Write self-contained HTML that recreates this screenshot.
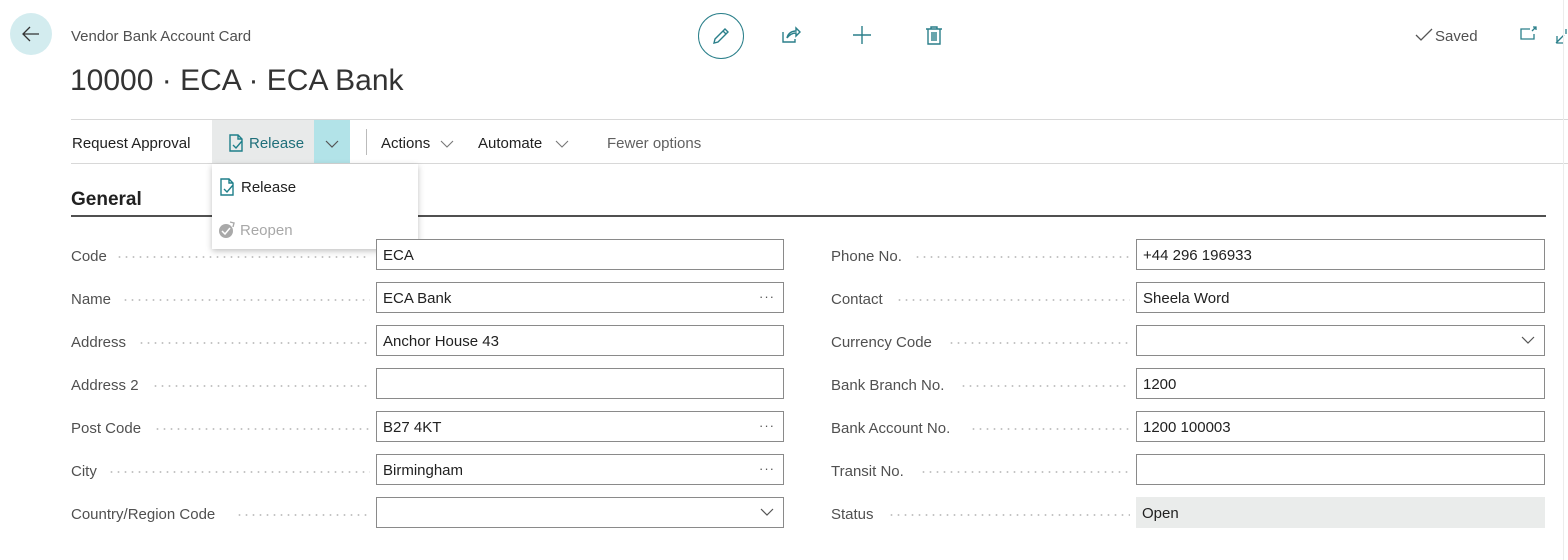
<!DOCTYPE html>
<html><head><meta charset="utf-8"><style>
*{box-sizing:border-box;margin:0;padding:0}
body{width:1568px;height:560px;background:#fff;font-family:"Liberation Sans",sans-serif;color:#212121;position:relative;overflow:hidden}
.a{position:absolute}
.lbl{position:absolute;font-size:15px;color:#505050;white-space:nowrap}
.dots{position:absolute;height:2px;background-image:radial-gradient(circle,#c4c4c4 0.8px,transparent 1.1px);background-size:7px 2px;background-repeat:repeat-x}
.in{position:absolute;height:31px;border:1px solid #8a8a8a;font-size:15px;padding:7px 6px 0;color:#212121;background:#fff}
.ell{position:absolute;right:8px;top:8px;color:#555;font-size:13px;letter-spacing:1px;line-height:12px}
.chev{position:absolute;right:9px;top:9px}
</style></head><body>
<div class="a" style="left:10px;top:13px;width:42px;height:42px;border-radius:50%;background:#d3ecef"></div>
<svg class="a" style="left:20px;top:23px" width="22" height="22" viewBox="0 0 22 22"><path d="M19 11H3M10 4L3 11l7 7" stroke="#333" stroke-width="1.3" fill="none"/></svg>
<div class="a" style="left:71px;top:28px;font-size:15px;color:#505050">Vendor Bank Account Card</div>
<div class="a" style="left:70px;top:64px;font-size:30px;color:#333;font-weight:300">10000 · ECA · ECA Bank</div>
<div class="a" style="left:698px;top:13px;width:46px;height:46px;border-radius:50%;border:1px solid #2a7f8a"></div>
<svg class="a" style="left:709px;top:24px" width="24" height="24" viewBox="0 0 24 24"><path d="M5 19l1-4 10-10 3 3-10 10z M14 7l3 3" stroke="#2a7f8a" stroke-width="1.4" fill="none"/></svg>
<svg class="a" style="left:780px;top:24px" width="22" height="22" viewBox="0 0 22 22"><path d="M3 8v10h12v-3M7 14c1-5 5-7 9-7V4l4 4-4 4V9c-3 0-6 1-9 5z" stroke="#2a7f8a" stroke-width="1.4" fill="none"/></svg>
<svg class="a" style="left:851px;top:24px" width="22" height="22" viewBox="0 0 22 22"><path d="M11 2v18M2 11h18" stroke="#2a7f8a" stroke-width="1.4"/></svg>
<svg class="a" style="left:923px;top:24px" width="22" height="22" viewBox="0 0 22 22"><path d="M3 5h16M8 5V3h6v2M5 5v15h12V5M9 8v9M11 8v9M13 8v9" stroke="#2a7f8a" stroke-width="1.4" fill="none"/></svg>
<svg class="a" style="left:1414px;top:27px" width="20" height="16" viewBox="0 0 20 16"><path d="M2 8l5 5L18 2" stroke="#555" stroke-width="1.3" fill="none"/></svg>
<div class="a" style="left:1435px;top:28px;font-size:15px;color:#505050">Saved</div>
<svg class="a" style="left:1519px;top:25px" width="20" height="18" viewBox="0 0 20 18"><path d="M11 4H2v10h13V9M14 2l3 0 0 3M17 2l-4 4" stroke="#2a7f8a" stroke-width="1.3" fill="none"/></svg>
<svg class="a" style="left:1554px;top:28px" width="14" height="18" viewBox="0 0 14 18"><path d="M2 15l8-8M3 8v7h7M12 1v5" stroke="#2a7f8a" stroke-width="1.3" fill="none"/></svg>

<div class="a" style="left:71px;top:119px;width:1497px;height:1px;background:#d8d8d8"></div>
<div class="a" style="left:71px;top:163px;width:1497px;height:1px;background:#d8d8d8"></div>
<div class="a" style="left:72px;top:135px;font-size:15px;color:#212121">Request Approval</div>
<div class="a" style="left:212px;top:120px;width:102px;height:43px;background:#e8eaea"></div>
<div class="a" style="left:314px;top:120px;width:36px;height:43px;background:#b2e3e8"></div>
<svg class="a" style="left:227px;top:133px" width="18" height="20" viewBox="0 0 18 20"><path d="M3 2h8l4 4v12H3zM11 2v4h4M6 12l3 3 6-7" stroke="#1f7f8a" stroke-width="1.4" fill="none"/></svg>
<div class="a" style="left:249px;top:135px;font-size:15px;color:#1f6f7a">Release</div>
<svg class="a" style="left:325px;top:139px" width="14" height="10" viewBox="0 0 14 10"><path d="M1 2l6 6 6-6" stroke="#555" stroke-width="1.2" fill="none"/></svg>
<div class="a" style="left:366px;top:129px;width:1px;height:26px;background:#bbb"></div>
<div class="a" style="left:381px;top:135px;font-size:15px">Actions</div>
<svg class="a" style="left:440px;top:139px" width="14" height="10" viewBox="0 0 14 10"><path d="M1 2l6 6 6-6" stroke="#777" stroke-width="1.1" fill="none"/></svg>
<div class="a" style="left:478px;top:135px;font-size:15px">Automate</div>
<svg class="a" style="left:555px;top:139px" width="14" height="10" viewBox="0 0 14 10"><path d="M1 2l6 6 6-6" stroke="#777" stroke-width="1.1" fill="none"/></svg>
<div class="a" style="left:607px;top:135px;font-size:15px;color:#606060">Fewer options</div>

<div class="a" style="left:71px;top:189px;font-size:19px;font-weight:bold;color:#212121">General</div>
<div class="a" style="left:71px;top:215px;width:1475px;height:2px;background:#505050"></div>

<div class="a" style="left:212px;top:164px;width:206px;height:85px;background:#fff;box-shadow:0 2px 6px rgba(0,0,0,.25)"></div>
<svg class="a" style="left:218px;top:177px" width="18" height="20" viewBox="0 0 18 20"><path d="M3 2h8l4 4v12H3zM11 2v4h4M6 12l3 3 6-7" stroke="#1f7f8a" stroke-width="1.4" fill="none"/></svg>
<div class="a" style="left:241px;top:179px;font-size:15px">Release</div>
<svg class="a" style="left:217px;top:220px" width="20" height="20" viewBox="0 0 20 20"><circle cx="9" cy="11" r="7" fill="#a9a9a9"/><path d="M5 11l3 3 5-6" stroke="#fff" stroke-width="1.5" fill="none"/><path d="M13 2l4 1-1 4" stroke="#a9a9a9" stroke-width="1.4" fill="none"/></svg>
<div class="a" style="left:240px;top:222px;font-size:15px;color:#a8a8a8">Reopen</div>

<!-- left column -->
<div class="lbl" style="left:71px;top:248px">Code</div><div class="dots" style="left:116px;top:256px;width:254px"></div>
<div class="in" style="left:376px;top:239px;width:408px">ECA</div>
<div class="lbl" style="left:71px;top:291px">Name</div><div class="dots" style="left:122px;top:299px;width:248px"></div>
<div class="in" style="left:376px;top:282px;width:408px">ECA Bank<span class="ell">···</span></div>
<div class="lbl" style="left:71px;top:334px">Address</div><div class="dots" style="left:138px;top:342px;width:232px"></div>
<div class="in" style="left:376px;top:325px;width:408px">Anchor House 43</div>
<div class="lbl" style="left:71px;top:377px">Address 2</div><div class="dots" style="left:152px;top:385px;width:218px"></div>
<div class="in" style="left:376px;top:368px;width:408px"></div>
<div class="lbl" style="left:71px;top:420px">Post Code</div><div class="dots" style="left:154px;top:428px;width:216px"></div>
<div class="in" style="left:376px;top:411px;width:408px">B27 4KT<span class="ell">···</span></div>
<div class="lbl" style="left:71px;top:463px">City</div><div class="dots" style="left:108px;top:471px;width:262px"></div>
<div class="in" style="left:376px;top:454px;width:408px">Birmingham<span class="ell">···</span></div>
<div class="lbl" style="left:71px;top:506px">Country/Region Code</div><div class="dots" style="left:236px;top:514px;width:134px"></div>
<div class="in" style="left:376px;top:497px;width:408px"><svg class="chev" width="14" height="10" viewBox="0 0 14 10"><path d="M1 2l6 6 6-6" stroke="#555" stroke-width="1.2" fill="none"/></svg></div>

<!-- right column -->
<div class="lbl" style="left:831px;top:248px">Phone No.</div><div class="dots" style="left:914px;top:256px;width:216px"></div>
<div class="in" style="left:1136px;top:239px;width:409px">+44 296 196933</div>
<div class="lbl" style="left:831px;top:291px">Contact</div><div class="dots" style="left:896px;top:299px;width:234px"></div>
<div class="in" style="left:1136px;top:282px;width:409px">Sheela Word</div>
<div class="lbl" style="left:831px;top:334px">Currency Code</div><div class="dots" style="left:948px;top:342px;width:182px"></div>
<div class="in" style="left:1136px;top:325px;width:409px"><svg class="chev" width="14" height="10" viewBox="0 0 14 10"><path d="M1 2l6 6 6-6" stroke="#555" stroke-width="1.2" fill="none"/></svg></div>
<div class="lbl" style="left:831px;top:377px">Bank Branch No.</div><div class="dots" style="left:960px;top:385px;width:170px"></div>
<div class="in" style="left:1136px;top:368px;width:409px">1200</div>
<div class="lbl" style="left:831px;top:420px">Bank Account No.</div><div class="dots" style="left:970px;top:428px;width:160px"></div>
<div class="in" style="left:1136px;top:411px;width:409px">1200 100003</div>
<div class="lbl" style="left:831px;top:463px">Transit No.</div><div class="dots" style="left:920px;top:471px;width:210px"></div>
<div class="in" style="left:1136px;top:454px;width:409px"></div>
<div class="lbl" style="left:831px;top:506px">Status</div><div class="dots" style="left:888px;top:514px;width:242px"></div>
<div class="in" style="left:1136px;top:497px;width:409px;border:none;background:#eaeceb;padding-top:8px">Open</div>
<div class="a" style="left:1563px;top:0;width:1px;height:560px;background:#ececec"></div>
</body></html>
